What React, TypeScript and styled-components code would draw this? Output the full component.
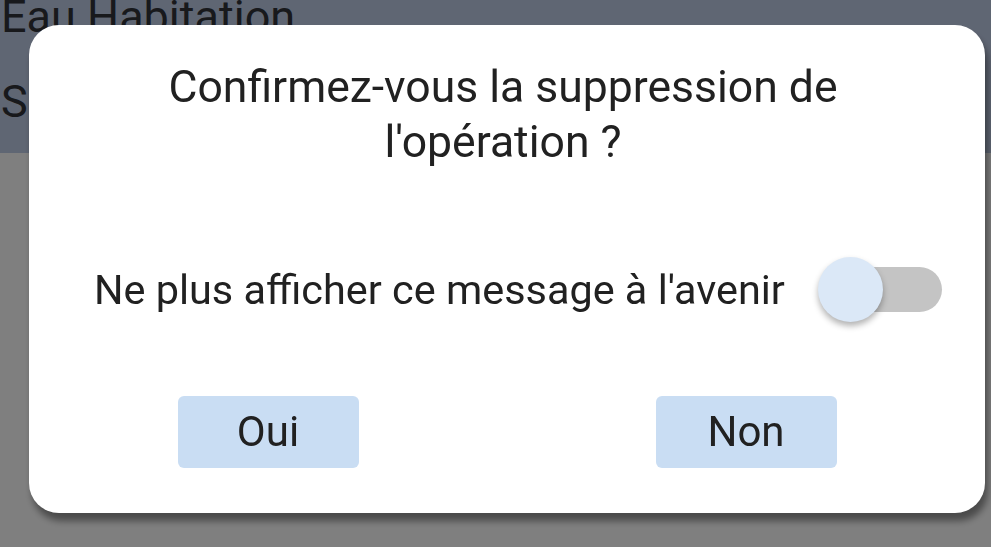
import React, { useState } from "react";
import styled, { createGlobalStyle } from "styled-components";

const Global = createGlobalStyle`
  html, body { margin: 0; padding: 0; }
  body {
    width: 991px;
    height: 547px;
    overflow: hidden;
    background: #ffffff;
    font-family: Roboto, "Noto Sans", sans-serif;
  }
  #root { width: 991px; height: 547px; }
`;

const Page = styled.div`
  width: 991px;
  height: 547px;
  background: #ffffff;
`;

const Header = styled.div`
  height: 153px;
  background: #bfcce6;
  padding-left: 1px;
  box-sizing: border-box;
  overflow: hidden;
`;

const HeaderLine = styled.div<{ $first?: boolean }>`
  font-size: 45px;
  line-height: 85px;
  color: #303339;
  white-space: nowrap;
  margin-top: ${(p) => (p.$first ? "-26px" : "0")};
`;

const Overlay = styled.div`
  position: fixed;
  inset: 0;
  background: rgba(0, 0, 0, 0.5);
  display: flex;
  align-items: flex-start;
  padding: 25px 6px 0 29px;
  box-sizing: border-box;
`;

const Dialog = styled.div`
  width: 956px;
  height: 488px;
  background: #ffffff;
  border-radius: 30px;
  box-shadow: 3px 8px 7px rgba(0, 0, 0, 0.42);
  box-sizing: border-box;
  padding: 35px 0 0 0;
  display: flex;
  flex-direction: column;
  color: #212121;
`;

const Title = styled.div`
  font-size: 44.5px;
  line-height: 55px;
  text-align: center;
  padding: 0 128px 0 120px;
`;

const OptionRow = styled.div`
  margin-top: 87px;
  display: flex;
  align-items: center;
  padding-left: 65px;
  height: 65px;
`;

const OptionLabel = styled.span`
  font-size: 41.4px;
  line-height: 48px;
  white-space: nowrap;
`;

const SwitchBox = styled.button`
  position: relative;
  width: 124px;
  height: 65px;
  margin-left: 33px;
  padding: 0;
  border: none;
  background: transparent;
  cursor: pointer;
`;

const Track = styled.span<{ $on: boolean }>`
  position: absolute;
  right: 0;
  top: 10px;
  width: 112px;
  height: 45px;
  border-radius: 23px;
  background: ${(p) => (p.$on ? "#9dbde6" : "#c4c4c4")};
`;

const Thumb = styled.span<{ $on: boolean }>`
  position: absolute;
  top: 0;
  left: ${(p) => (p.$on ? "59px" : "0")};
  width: 65px;
  height: 65px;
  border-radius: 50%;
  background: #dbe8f7;
  box-shadow: 0 4px 6px rgba(0, 0, 0, 0.3);
`;

const Buttons = styled.div`
  margin-top: 74px;
  display: grid;
  grid-template-columns: 1fr 1fr;
  justify-items: center;
`;

const ActionButton = styled.button`
  width: 181px;
  height: 72px;
  border: none;
  border-radius: 6px;
  background: #c9ddf3;
  color: #212121;
  font-family: Roboto, "Noto Sans", sans-serif;
  font-size: 42px;
  line-height: 72px;
  padding: 0;
  cursor: pointer;
`;

export default function App() {
  const [hide, setHide] = useState(false);
  return (
    <>
      <Global />
      <Page>
        <Header>
          <HeaderLine $first>Eau Habitation</HeaderLine>
          <HeaderLine>Saisie rapide</HeaderLine>
        </Header>
      </Page>
      <Overlay>
        <Dialog>
          <Title>Confirmez-vous la suppression de l'opération ?</Title>
          <OptionRow>
            <OptionLabel>Ne plus afficher ce message à l'avenir</OptionLabel>
            <SwitchBox role="switch" aria-checked={hide} onClick={() => setHide(!hide)}>
              <Track $on={hide} />
              <Thumb $on={hide} />
            </SwitchBox>
          </OptionRow>
          <Buttons>
            <ActionButton>Oui</ActionButton>
            <ActionButton>Non</ActionButton>
          </Buttons>
        </Dialog>
      </Overlay>
    </>
  );
}
